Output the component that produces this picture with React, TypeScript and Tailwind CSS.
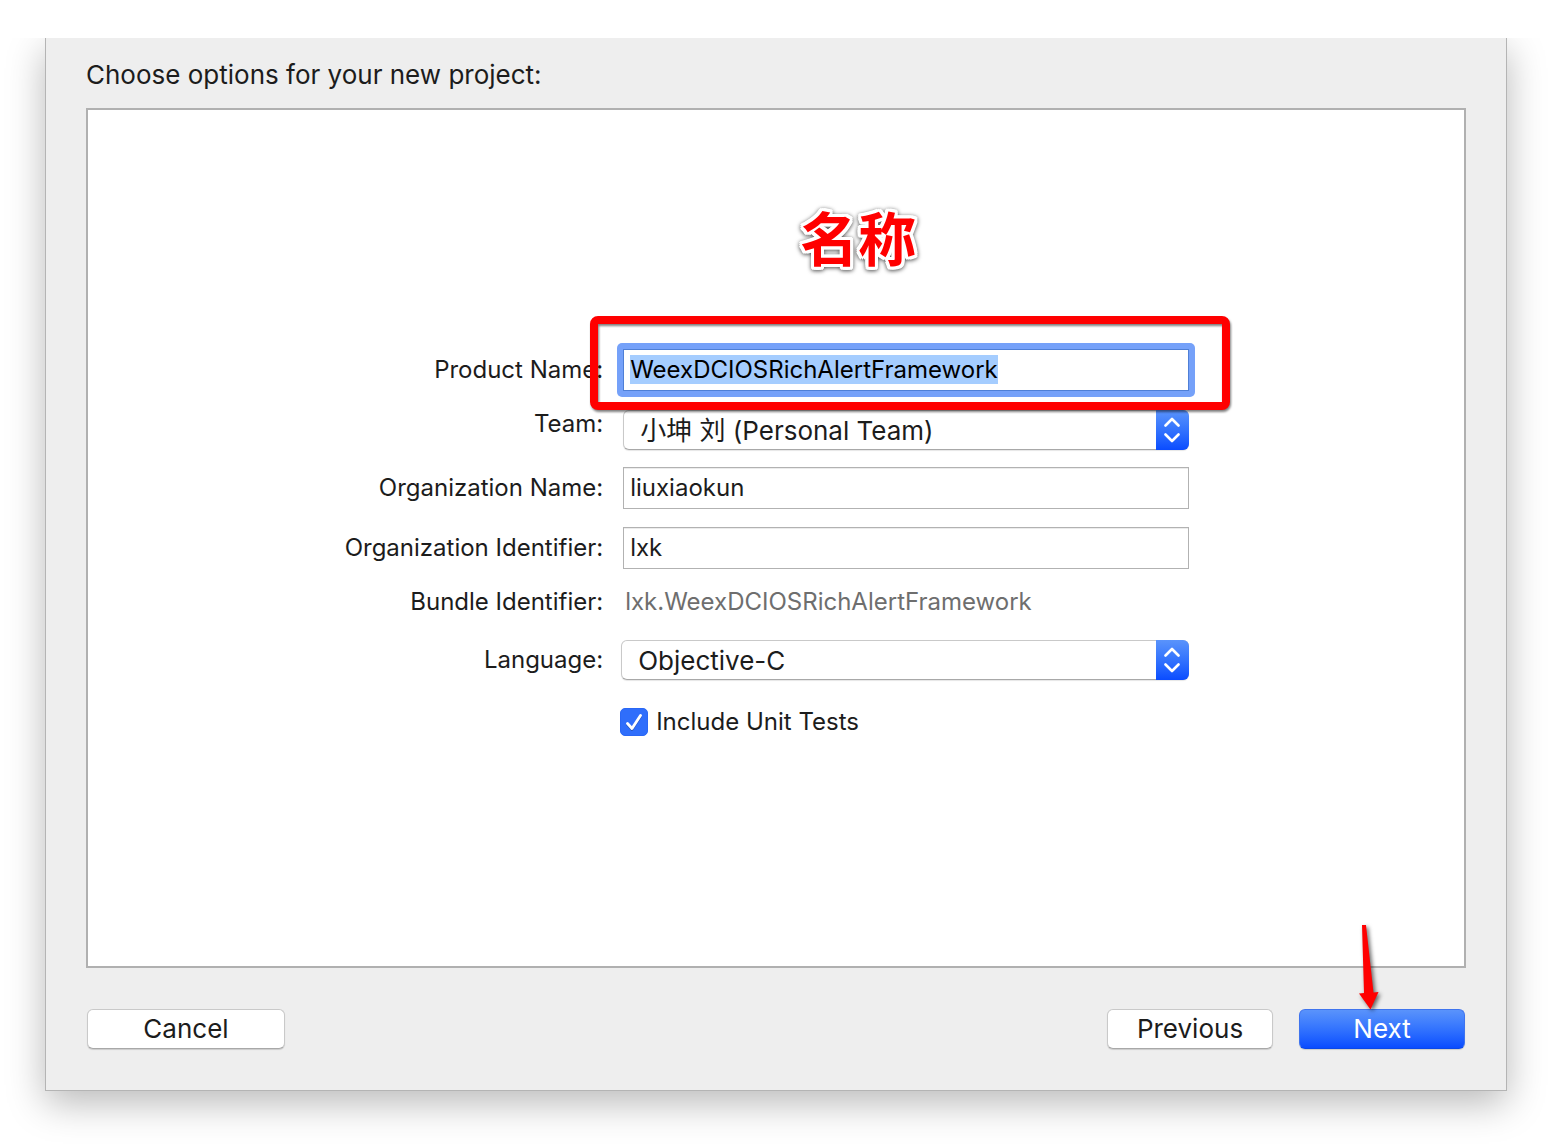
import { useEffect, useRef, type ReactNode } from "react";

const selectClass =
  "block h-10 w-full appearance-none rounded-md border border-[#c9c9c9] border-b-[#a8a8a8] bg-white pt-0.5 pl-4 pr-10 text-[26px] leading-[30px] text-[#1c1c1c] shadow-[0_1px_1px_rgba(0,0,0,0.1)] outline-none";

const inputClass =
  "block h-[42px] w-full border border-[#b2b2b2] bg-white px-1.5 pb-0.5 text-[24px] leading-[30px] text-[#1c1c1c] shadow-[inset_0_1px_0_#ececec] outline-none";

const buttonClass = "h-10 rounded-md text-[26px] leading-[30px]";

const plainButtonClass =
  "border border-[#c9c9c9] border-b-[#a8a8a8] bg-white shadow-[0_1px_1px_rgba(0,0,0,0.15)]";

function Row({
  label,
  htmlFor,
  className,
  top = false,
  children,
}: {
  label: string;
  htmlFor: string;
  className?: string;
  top?: boolean;
  children: ReactNode;
}) {
  return (
    <div
      className={`grid grid-cols-[46.8%_1fr] gap-x-5 pr-[20%] ${top ? "items-start" : "items-center"} ${className ?? ""}`}
    >
      <label htmlFor={htmlFor} className="text-right text-[24px] leading-7 whitespace-nowrap">
        {label}
      </label>
      {children}
    </div>
  );
}

function Stepper() {
  return (
    <span className="pointer-events-none absolute inset-y-0 right-0 flex w-[33px] items-center justify-center rounded-r-md bg-linear-to-b from-[#5a93fb] to-[#0a4bff]">
      <svg
        width="16"
        height="26"
        viewBox="0 0 16 26"
        fill="none"
        stroke="white"
        strokeWidth="2.6"
        strokeLinecap="round"
        strokeLinejoin="round"
        aria-hidden="true"
      >
        <path d="M1.500 8.500 8 2l6.500 6.500" />
        <path d="M1.500 17.500 8 24l6.500-6.500" />
      </svg>
    </span>
  );
}

export default function App() {
  const productName = useRef<HTMLInputElement>(null);

  useEffect(() => {
    productName.current?.focus();
    productName.current?.select();
  }, []);

  return (
    <div className="min-h-screen bg-white pt-[38px] font-['Inter','Noto_Sans_CJK_SC',sans-serif] text-[#1c1c1c]">
      <div className="flex min-h-[calc(100vh-38px)] flex-col overflow-hidden px-[45px] pb-[53px]">
        <main className="flex flex-1 flex-col border border-t-0 border-[#b4b4b4] bg-[#eeeeee] px-10 pb-[41px] shadow-[0_12px_36px_rgba(0,0,0,0.28)]">
          <h1 className="pt-[22px] pb-[18px] text-[26px] leading-[30px]">
            Choose options for your new project:
          </h1>

          <section className="flex-1 border-2 border-[#b0b0b0] bg-white pt-[239px] pb-10">
            <Row label="Product Name:" htmlFor="product-name">
              <div className="relative">
                <div className="-m-1.5 rounded-[5px] bg-[#75a1f9] p-1.5">
                  <input
                    ref={productName}
                    id="product-name"
                    defaultValue="WeexDCIOSRichAlertFramework"
                    className="block h-[42px] w-full border border-[#4f7fd6] bg-white px-1.5 pb-0.5 text-[24px] leading-[30px] text-black outline-none selection:bg-[#a5cdfffe] selection:text-black"
                  />
                </div>
                <div className="pointer-events-none absolute -top-[33px] -right-[41px] -bottom-[19px] -left-[33px] z-10 rounded-lg border-8 border-[#ff0000] drop-shadow-[1px_2px_1px_rgba(0,0,0,0.5)]" />
                <p className="absolute bottom-full left-[177px] mb-[73px] text-[58px] leading-[72px] font-bold whitespace-nowrap text-[#ff0000] drop-shadow-[0_1px_2px_rgba(0,0,0,0.7)] [text-shadow:3px_0_white,-3px_0_white,0_3px_white,0_-3px_white,2px_2px_white,-2px_2px_white,2px_-2px_white,-2px_-2px_white,3px_2px_white,-3px_2px_white,3px_-2px_white,-3px_-2px_white,2px_3px_white,-2px_3px_white,2px_-3px_white,-2px_-3px_white]">
                  名称
                </p>
              </div>
            </Row>

            <Row label="Team:" htmlFor="team" top className="mt-[19px]">
              <div className="relative">
                <select id="team" className={selectClass}>
                  <option>小坤 刘 (Personal Team)</option>
                </select>
                <Stepper />
              </div>
            </Row>

            <Row label="Organization Name:" htmlFor="organization-name" className="mt-[17px]">
              <input id="organization-name" defaultValue="liuxiaokun" className={inputClass} />
            </Row>

            <Row label="Organization Identifier:" htmlFor="organization-identifier" className="mt-[18px]">
              <input id="organization-identifier" defaultValue="lxk" className={inputClass} />
            </Row>

            <Row label="Bundle Identifier:" htmlFor="bundle-identifier" className="mt-[18px]">
              <output id="bundle-identifier" className="pl-0.5 text-[24px] leading-[30px] text-[#6e6e6e]">
                lxk.WeexDCIOSRichAlertFramework
              </output>
            </Row>

            <Row label="Language:" htmlFor="language" className="mt-[23px]">
              <div className="relative -ml-0.5">
                <select id="language" className={selectClass}>
                  <option>Objective-C</option>
                </select>
                <Stepper />
              </div>
            </Row>

            <div className="mt-7 grid grid-cols-[46.8%_1fr] gap-x-[17px] pr-[20%]">
              <label className="col-start-2 flex items-center gap-2 text-[24px] leading-7">
                <span className="relative size-7">
                  <input
                    type="checkbox"
                    defaultChecked
                    className="peer block size-7 appearance-none rounded-[5px] border border-[#b2b2b2] bg-white checked:border-[#2a67f5] checked:bg-[#2f6efb]"
                  />
                  <svg
                    className="pointer-events-none absolute inset-0 hidden drop-shadow-[0_1px_0_rgba(0,0,0,0.25)] peer-checked:block"
                    width="28"
                    height="28"
                    viewBox="0 0 28 28"
                    fill="none"
                    stroke="white"
                    strokeWidth="2.8"
                    strokeLinecap="round"
                    strokeLinejoin="round"
                    aria-hidden="true"
                  >
                    <path d="M7.500 15.500 12 20.500 20.500 7.500" />
                  </svg>
                </span>
                Include Unit Tests
              </label>
            </div>
          </section>

          <footer className="flex px-px pt-[41px]">
            <button type="button" className={`${buttonClass} ${plainButtonClass} w-[198px]`}>
              Cancel
            </button>
            <button type="button" className={`${buttonClass} ${plainButtonClass} ml-auto w-[166px]`}>
              Previous
            </button>
            <div className="relative ml-[26px]">
              <button
                type="button"
                className={`${buttonClass} w-[166px] border border-[#3f74ee] border-b-[#0a48e8] bg-linear-to-b from-[#5a93fb] to-[#0a4bff] text-white shadow-[0_1px_1px_rgba(0,0,0,0.15)]`}
              >
                Next
              </button>
              <svg
                className="pointer-events-none absolute bottom-full left-14 overflow-visible drop-shadow-[2px_2px_2px_rgba(0,0,0,0.6)]"
                width="28"
                height="88"
                viewBox="0 0 28 88"
                aria-hidden="true"
              >
                <path d="M7 4h4l7.500 67.500 5-.5-8 17.500L4 72.500l5-.5Z" fill="#ff0000" />
              </svg>
            </div>
          </footer>
        </main>
      </div>
    </div>
  );
}
